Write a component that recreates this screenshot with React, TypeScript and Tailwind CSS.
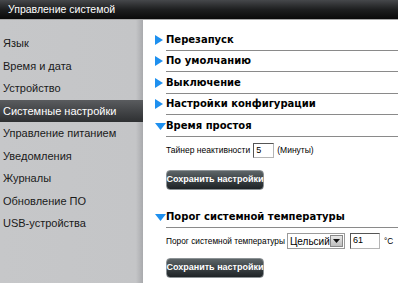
const menu = [
  'Язык',
  'Время и дата',
  'Устройство',
  'Системные настройки',
  'Управление питанием',
  'Уведомления',
  'Журналы',
  'Обновление ПО',
  'USB-устройства',
];

const sans = { fontFamily: '"Liberation Sans", Arial, sans-serif' };
const heading = { fontFamily: '"DejaVu Sans", Verdana, sans-serif' };

function ArrowRight() {
  return (
    <svg width="8" height="10" viewBox="0 0 8 10" className="shrink-0">
      <path d="M0 0 L8 5 L0 10 Z" fill="#1e90ef" />
    </svg>
  );
}

function ArrowDown() {
  return (
    <svg width="11" height="7" viewBox="0 0 11 7" className="shrink-0">
      <path d="M0 0 L11 0 L5.5 7 Z" fill="#1e90ef" />
    </svg>
  );
}

function Section({ label, open }: { label: string; open?: boolean }) {
  return (
    <div className={open ? 'flex h-[22px] items-center' : 'flex h-[21.5px] items-center'}>
      <div className="w-[11px]">{open ? <ArrowDown /> : <ArrowRight />}</div>
      <div
        className="flex h-full flex-1 items-center border-b border-[#8a8a8a] text-[10px] font-bold text-black"
        style={heading}
      >
        {label}
      </div>
    </div>
  );
}

function SaveButton() {
  return (
    <button
      className="flex h-[20px] w-[98px] items-center justify-center whitespace-nowrap rounded-[4px] border border-[#8c9295] bg-gradient-to-b from-[#5d6568] to-[#1e2326] text-[9px] font-bold text-white"
      style={sans}
    >
      Сохранить настройки
    </button>
  );
}

export default function App() {
  return (
    <div className="h-[283px] w-[398px] overflow-hidden bg-white" style={sans}>
      <div className="flex h-[19px] items-center bg-gradient-to-b from-[#46484b] via-[#1e1f20] to-[#0a0a0a] pl-[8px] text-[10.5px] text-white">
        Управление системой
      </div>
      <div className="h-[1px] bg-[#a8a8a8]" />
      <div className="flex h-[263px]">
        <div className="w-[143px] shrink-0 bg-gradient-to-r from-[#c6c7c9] via-[#c4c5c7] via-[95%] to-[#a9aaad] pt-[12px]">
          {menu.map((m) =>
            m === 'Системные настройки' ? (
              <div
                key={m}
                className="flex h-[22.5px] items-center bg-gradient-to-b from-[#5a5c5f] to-[#2e3032] pl-[3px] text-[11px] text-white"
              >
                {m}
              </div>
            ) : (
              <div key={m} className="flex h-[22.5px] items-center pl-[3px] text-[11px] text-[#1a1a1a]">
                {m}
              </div>
            )
          )}
        </div>
        <div className="min-w-0 flex-1 pl-[12px] pt-[9px]">
          <Section label="Перезапуск" />
          <Section label="По умолчанию" />
          <Section label="Выключение" />
          <Section label="Настройки конфигурации" />
          <Section label="Время простоя" open />
          <div className="pl-[11px]">
            <div className="mt-[6px] flex h-[15px] items-center gap-[3px] whitespace-nowrap text-[8.5px] text-black">
              <span>Тайнер неактивности</span>
              <div className="flex h-[15px] w-[21px] shrink-0 items-center border border-[#b5b5b5] border-l-[#555] border-t-[#555] bg-white pl-[2px] text-[9px]">
                5
              </div>
              <span>(Минуты)</span>
            </div>
            <div className="mt-[12px]">
              <SaveButton />
            </div>
          </div>
          <div className="mt-[16px]">
            <Section label="Порог системной температуры" open />
          </div>
          <div className="pl-[11px]">
            <div className="mt-[5px] flex h-[16px] items-center whitespace-nowrap text-[8.3px] text-black">
              <span>Порог системной температуры</span>
              <div className="ml-[2px] flex h-[16px] w-[58px] shrink-0 items-center justify-between border border-[#9a9a9a] bg-white pl-[2px] text-[10px]">
                <span>Цельсий</span>
                <div className="mr-[1px] flex h-[12px] w-[13px] items-center justify-center border border-[#888] bg-gradient-to-b from-[#e8e8e8] to-[#bdbdbd]">
                  <svg width="7" height="4" viewBox="0 0 7 4">
                    <path d="M0 0 L7 0 L3.5 4 Z" fill="#111" />
                  </svg>
                </div>
              </div>
              <div className="ml-[5px] flex h-[16px] w-[30px] shrink-0 items-center border border-[#b5b5b5] border-l-[#555] border-t-[#555] bg-white pl-[2px] text-[9px]">
                61
              </div>
              <span className="ml-[4px]">°C</span>
            </div>
            <div className="mt-[9px]">
              <SaveButton />
            </div>
          </div>
        </div>
      </div>
    </div>
  );
}
